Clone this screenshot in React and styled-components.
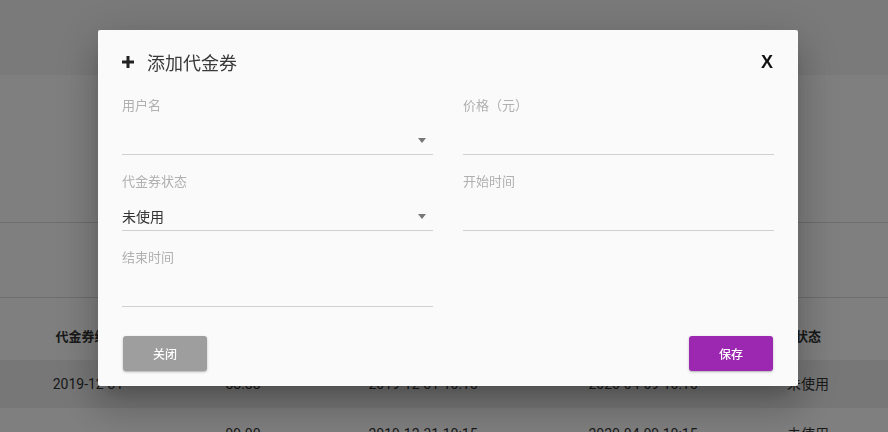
import React from "react";
import styled, { createGlobalStyle } from "styled-components";

const GlobalStyle = createGlobalStyle`
  html, body {
    margin: 0;
    padding: 0;
    font-family: Roboto, "Noto Sans CJK SC", sans-serif;
  }
  * {
    box-sizing: border-box;
  }
`;

const Page = styled.div`
  width: 100%;
  height: 100vh;
  background-color: #fff;
  overflow: hidden;
  color: #333;
`;

const TopBand = styled.div`
  height: 75px;
  background-color: #f4f4f4;
`;

const FilterArea = styled.div`
  height: 148px;
  border-bottom: 1px solid #dcdcdc;
`;

const Toolbar = styled.div`
  height: 75px;
  border-bottom: 1px solid #dcdcdc;
`;

const TableRow = styled.div`
  display: grid;
  grid-template-columns: 176px 134px 226px 214px 116px 1fr;
  height: ${(props) => (props.head ? "62px" : "48px")};
  align-items: ${(props) => (props.head ? "end" : "center")};
  padding-bottom: ${(props) => (props.head ? "13px" : "0")};
  padding-top: ${(props) => (props.last ? "4px" : "0")};
  background-color: ${(props) => (props.striped ? "#eeeeee" : "transparent")};
  font-size: ${(props) => (props.head ? "13px" : "14px")};
  font-weight: ${(props) => (props.head ? 700 : 400)};
  line-height: 20px;

  span {
    text-align: center;
    white-space: nowrap;
  }
`;

const Overlay = styled.div`
  position: fixed;
  inset: 0;
  background-color: rgba(0, 0, 0, 0.5);
  padding: 30px 0 0 98px;
`;

const Dialog = styled.div`
  width: 700px;
  height: 356px;
  background-color: #fafafa;
  border-radius: 2px;
  padding: 18px 24px 15px;
  display: flex;
  flex-direction: column;
  box-shadow: 0 11px 15px -7px rgba(0, 0, 0, 0.2),
    0 24px 38px 3px rgba(0, 0, 0, 0.14), 0 9px 46px 8px rgba(0, 0, 0, 0.12);
`;

const DialogHeader = styled.div`
  height: 30px;
  display: flex;
  align-items: center;
  justify-content: space-between;
`;

const Title = styled.div`
  display: flex;
  align-items: center;
  gap: 13px;
  font-size: 18px;
  color: #3a3a3a;
`;

const CloseButton = styled.div`
  font-family: "Liberation Sans", Arial, sans-serif;
  font-weight: 700;
  font-size: 18px;
  color: #111;
  margin-right: 1px;
  line-height: 20px;
`;

const FormGrid = styled.div`
  margin-top: 20px;
  display: grid;
  grid-template-columns: 1fr 1fr;
  column-gap: 30px;
  row-gap: 17px;
`;

const Field = styled.div`
  display: flex;
  flex-direction: column;
`;

const Label = styled.div`
  font-size: 13px;
  line-height: 20px;
  color: #b0b0b0;
`;

const InputRow = styled.div`
  height: 39px;
  border-bottom: 1px solid #cfcfcf;
  display: flex;
  align-items: flex-end;
  justify-content: space-between;
  padding: 0 7px 5px 0;
`;

const Value = styled.span`
  font-size: 14px;
  line-height: 16px;
  color: #333;
`;

const Arrow = styled.span`
  width: 0;
  height: 0;
  border-left: 4px solid transparent;
  border-right: 4px solid transparent;
  border-top: 5px solid #777;
  margin-bottom: 6px;
`;

const Footer = styled.div`
  margin-top: 29px;
  display: flex;
  justify-content: space-between;
  padding: 0 1px 0 1px;
`;

const Button = styled.button`
  width: 84px;
  height: 35px;
  border: none;
  border-radius: 3px;
  background-color: ${(props) => (props.primary ? "#9c27b0" : "#9e9e9e")};
  color: #fff;
  font-family: Roboto, "Noto Sans CJK SC", sans-serif;
  font-size: 12px;
  font-weight: 500;
  box-shadow: 0 1px 3px rgba(0, 0, 0, 0.2), 0 1px 1px rgba(0, 0, 0, 0.12);
`;

const PlusIcon = () => (
  <svg width="12" height="12" viewBox="0 0 12 12">
    <path d="M6 0v12M0 6h12" stroke="#222" strokeWidth="3" />
  </svg>
);

const rows = [
  ["2019-12-31", "88.88", "2019-12-31 10:15", "2020-04-09 10:15", "未使用"],
  ["", "99.00", "2019-12-31 10:15", "2020-04-09 10:15", "未使用"],
];

export default function App() {
  return (
    <>
      <GlobalStyle />
      <Page>
        <TopBand />
        <FilterArea />
        <Toolbar />
        <TableRow head>
          <span>代金券编号</span>
          <span>金额</span>
          <span>开始时间</span>
          <span>结束时间</span>
          <span>状态</span>
        </TableRow>
        {rows.map((r, i) => (
          <TableRow key={i} striped={i % 2 === 0} last={i === rows.length - 1}>
            {r.map((c, j) => (
              <span key={j}>{c}</span>
            ))}
          </TableRow>
        ))}
      </Page>
      <Overlay>
        <Dialog>
          <DialogHeader>
            <Title>
              <PlusIcon />
              <span>添加代金券</span>
            </Title>
            <CloseButton>X</CloseButton>
          </DialogHeader>
          <FormGrid>
            <Field>
              <Label>用户名</Label>
              <InputRow>
                <Value />
                <Arrow />
              </InputRow>
            </Field>
            <Field>
              <Label>价格（元）</Label>
              <InputRow />
            </Field>
            <Field>
              <Label>代金券状态</Label>
              <InputRow>
                <Value>未使用</Value>
                <Arrow />
              </InputRow>
            </Field>
            <Field>
              <Label>开始时间</Label>
              <InputRow />
            </Field>
            <Field>
              <Label>结束时间</Label>
              <InputRow />
            </Field>
          </FormGrid>
          <Footer>
            <Button>关闭</Button>
            <Button primary>保存</Button>
          </Footer>
        </Dialog>
      </Overlay>
    </>
  );
}
